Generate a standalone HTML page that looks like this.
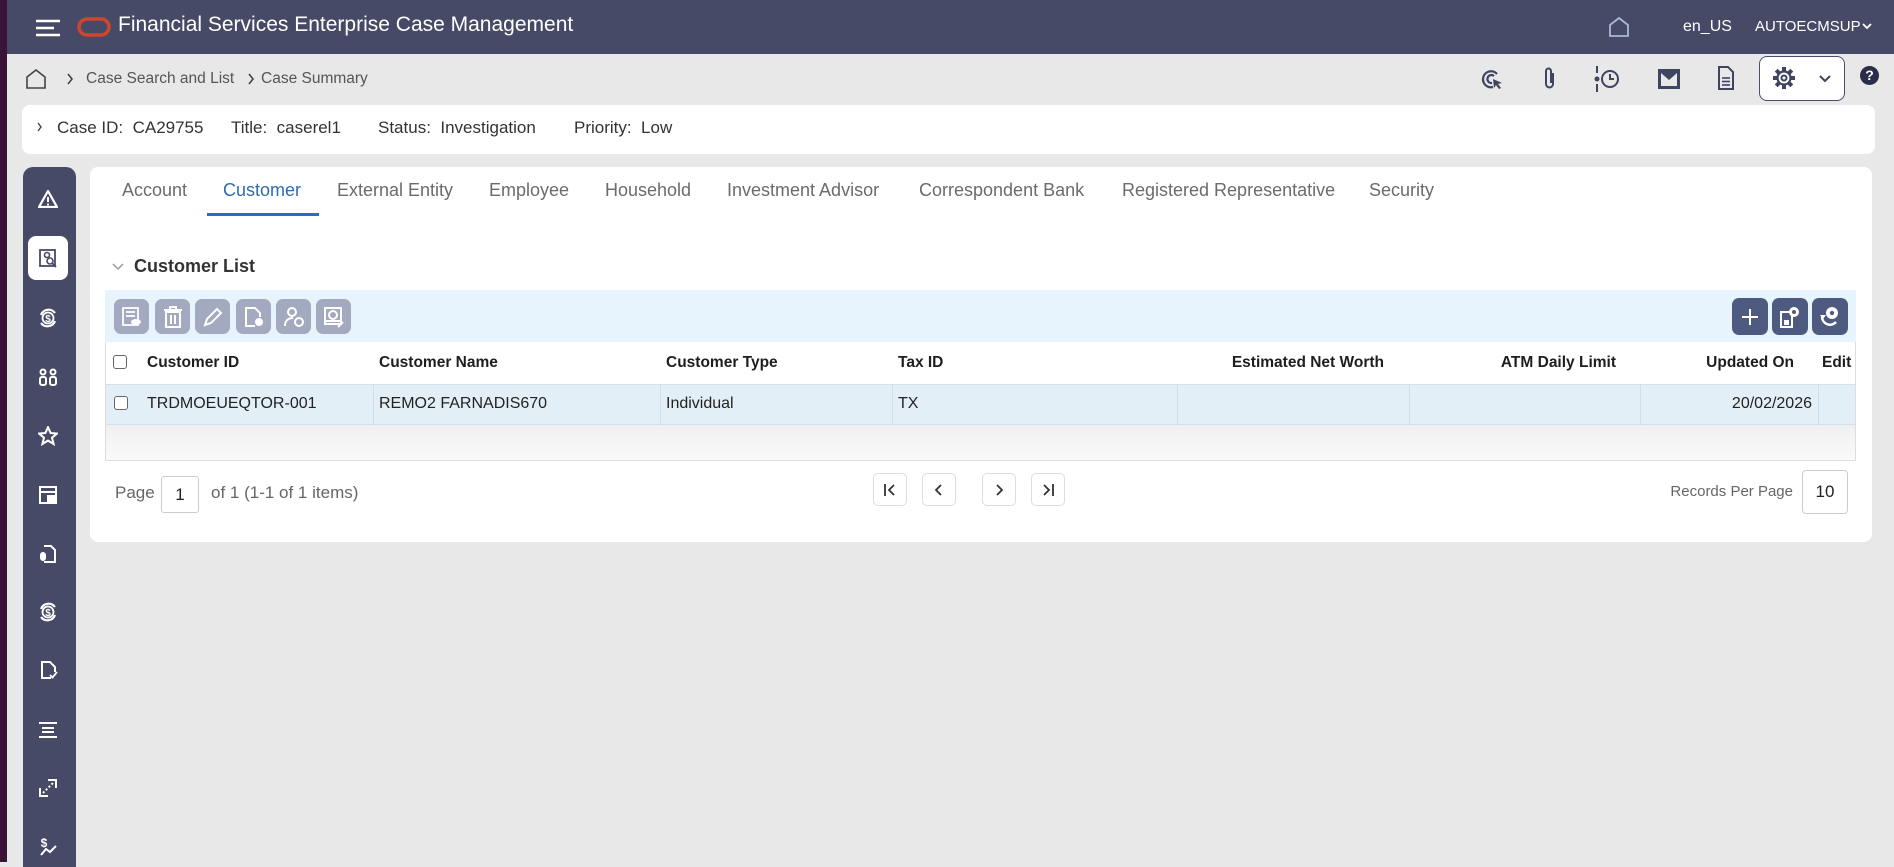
<!DOCTYPE html>
<html><head><meta charset="utf-8"><style>
*{box-sizing:border-box;margin:0;padding:0}
body{width:1894px;height:862px;overflow:hidden;background:#e8e8e8;font-family:"Liberation Sans",sans-serif;position:relative;color:#333}
.a{position:absolute}
.hdr{left:0;top:0;width:1894px;height:54px;background:#474a66}
.stripe{left:0;top:0;width:7px;height:862px;background:#3a1436}
.t{white-space:nowrap}
.tab{top:180px;font-size:18px;color:#6b6b6b}
.tb{width:35px;height:35px;top:299px;border-radius:7px;background:#a3a9be;display:flex;align-items:center;justify-content:center}
.rb{width:36px;height:37px;top:298px;border-radius:7px;background:#4f5a80;display:flex;align-items:center;justify-content:center}
.th{top:354px;font-size:15.5px;font-weight:bold;color:#1e1e1e}
.td{top:395px;font-size:16px;color:#222}
.sep{top:384px;width:1px;height:41px;background:#d4dde3}
.nb{top:473px;width:34px;height:33px;border:1px solid #ddd;border-radius:5px;background:#fff;display:flex;align-items:center;justify-content:center}
.cb{width:14px;height:14px;border:1.5px solid #666;border-radius:3px;background:#fff}
</style></head><body>
<div class="a hdr"></div>
<div class="a stripe"></div>
<svg class="a" style="left:36px;top:19px" width="26" height="18"><g stroke="#fff" stroke-width="2.5"><line x1="0" y1="2" x2="24" y2="2"/><line x1="0" y1="9" x2="18" y2="9"/><line x1="0" y1="16" x2="24" y2="16"/></g></svg>
<svg class="a" style="left:77px;top:17px" width="34" height="20"><rect x="2" y="2" width="30" height="16" rx="8" fill="none" stroke="#d2452c" stroke-width="3.5"/></svg>
<div class="a t" style="left:118px;top:13px;font-size:21px;color:#fff">Financial Services Enterprise Case Management</div>
<svg class="a" style="left:1608px;top:16px" width="22" height="22"><path d="M2 20V9L11 2l9 7v11z" fill="none" stroke="#aab8dc" stroke-width="1.8"/></svg>
<div class="a t" style="left:1683px;top:18px;font-size:16px;color:#fff">en_US</div>
<div class="a t" style="left:1755px;top:18px;font-size:15px;color:#fff">AUTOECMSUP</div>
<svg class="a" style="left:1861px;top:22px" width="12" height="8"><path d="M2 2l4 4 4-4" fill="none" stroke="#fff" stroke-width="1.8"/></svg>
<!-- breadcrumb -->
<svg class="a" style="left:25px;top:68px" width="22" height="22"><path d="M2 20V9L11 2l9 7v11z" fill="none" stroke="#444" stroke-width="1.6"/></svg>
<svg class="a" style="left:66px;top:73px" width="8" height="12"><path d="M2 1l4 5-4 5" fill="none" stroke="#444" stroke-width="1.6"/></svg>
<div class="a t" style="left:86px;top:70px;font-size:15.5px;color:#555">Case Search and List</div>
<svg class="a" style="left:247px;top:73px" width="8" height="12"><path d="M2 1l4 5-4 5" fill="none" stroke="#444" stroke-width="1.6"/></svg>
<div class="a t" style="left:261px;top:70px;font-size:15.5px;color:#555">Case Summary</div>
<!-- right icons -->
<svg class="a" style="left:1481px;top:68px" width="24" height="24"><g fill="none" stroke="#3f4460" stroke-width="2.2"><path d="M16 6a8 8 0 1 0-4 13"/><path d="M13 8a4 4 0 1 0-2 7"/></g><path d="M12 11l9 4-4 1 3 4-2 1-3-4-2 3z" fill="#3f4460"/></svg>
<svg class="a" style="left:1542px;top:66px" width="16" height="26"><path d="M11 7v11a3.5 3.5 0 0 1-7 0V5a2.5 2.5 0 0 1 5 0v12" fill="none" stroke="#3f4460" stroke-width="2"/></svg>
<svg class="a" style="left:1594px;top:65px" width="28" height="28"><g stroke="#3f4460" stroke-width="2" fill="none"><line x1="3" y1="1" x2="3" y2="8"/><line x1="3" y1="19" x2="3" y2="27"/><circle cx="16" cy="14" r="8"/><path d="M16 9v5h4"/></g><circle cx="3" cy="14" r="2.5" fill="#3f4460"/></svg>
<svg class="a" style="left:1657px;top:68px" width="24" height="22"><rect x="1" y="1" width="22" height="20" fill="#3f4460"/><path d="M4 5l8 7 8-7v13H4z" fill="#e8e8e8"/></svg>
<svg class="a" style="left:1717px;top:66px" width="18" height="24"><path d="M2 1h9l5 5v17H2z" fill="none" stroke="#3f4460" stroke-width="2"/><g stroke="#3f4460" stroke-width="1.6"><line x1="5" y1="12" x2="13" y2="12"/><line x1="5" y1="15.5" x2="13" y2="15.5"/><line x1="5" y1="19" x2="13" y2="19"/></g></svg>
<div class="a" style="left:1759px;top:56px;width:86px;height:45px;border:1.5px solid #4a4e68;border-radius:8px;background:#fff"></div>
<svg class="a" style="left:1771px;top:65px" width="26" height="26"><g transform="translate(13 13)" fill="#3f4460"><rect x="-2" y="-11" width="4" height="5"/><rect x="-2" y="-11" width="4" height="5" transform="rotate(45)"/><rect x="-2" y="-11" width="4" height="5" transform="rotate(90)"/><rect x="-2" y="-11" width="4" height="5" transform="rotate(135)"/><rect x="-2" y="-11" width="4" height="5" transform="rotate(180)"/><rect x="-2" y="-11" width="4" height="5" transform="rotate(225)"/><rect x="-2" y="-11" width="4" height="5" transform="rotate(270)"/><rect x="-2" y="-11" width="4" height="5" transform="rotate(315)"/></g><circle cx="13" cy="13" r="6.5" fill="#fff" stroke="#3f4460" stroke-width="2.2"/><circle cx="13" cy="13" r="2.5" fill="none" stroke="#3f4460" stroke-width="2"/></svg>
<svg class="a" style="left:1818px;top:74px" width="14" height="9"><path d="M2 2l5 5 5-5" fill="none" stroke="#3f4460" stroke-width="2"/></svg>
<div class="a" style="left:1860px;top:66px;width:19px;height:19px;border-radius:50%;background:#2a2e48;color:#fff;font-size:14px;font-weight:bold;text-align:center;line-height:19px">?</div>
<!-- case bar -->
<div class="a" style="left:22px;top:105px;width:1853px;height:49px;background:#fff;border-radius:8px"></div>
<svg class="a" style="left:36px;top:122px" width="8" height="10"><path d="M2 1l3 4-3 4" fill="none" stroke="#444" stroke-width="1.4"/></svg>
<div class="a t" style="left:57px;top:118px;font-size:17px;color:#333">Case ID:&nbsp; CA29755</div>
<div class="a t" style="left:231px;top:118px;font-size:17px;color:#333">Title:&nbsp;&nbsp;caserel1</div>
<div class="a t" style="left:378px;top:118px;font-size:17px;color:#333">Status:&nbsp; Investigation</div>
<div class="a t" style="left:574px;top:118px;font-size:17px;color:#333">Priority:&nbsp; Low</div>
<!-- sidebar -->
<div class="a" style="left:23px;top:167px;width:53px;height:700px;background:#474a66;border-radius:10px 10px 0 0"></div>
<div class="a" style="left:28px;top:236px;width:40px;height:44px;background:#fff;border-radius:8px"></div>
<svg class="a" style="left:38px;top:190px" width="20" height="18"><path d="M10 1L19 17H1z" fill="none" stroke="#fff" stroke-width="2.2"/><line x1="10" y1="7" x2="10" y2="12" stroke="#fff" stroke-width="2"/><circle cx="10" cy="14.5" r="1.1" fill="#fff"/></svg>
<svg class="a" style="left:39px;top:249px" width="19" height="19"><rect x="1" y="1" width="15" height="16" fill="none" stroke="#474a66" stroke-width="1.8"/><circle cx="8" cy="6" r="2.5" fill="none" stroke="#474a66" stroke-width="1.6"/><circle cx="11" cy="12" r="3" fill="#fff" stroke="#474a66" stroke-width="1.6"/><line x1="13" y1="14" x2="17" y2="18" stroke="#474a66" stroke-width="1.8"/></svg>
<svg class="a" style="left:37px;top:307px" width="22" height="22"><path d="M4 8a8 8 0 0 1 14-2M18 14a8 8 0 0 1-14 2" fill="none" stroke="#fff" stroke-width="2.2"/><circle cx="11" cy="11" r="5.5" fill="none" stroke="#fff" stroke-width="1.8"/><text x="11" y="15" font-size="10" font-weight="bold" fill="#fff" text-anchor="middle" font-family="Liberation Sans">$</text></svg>
<svg class="a" style="left:38px;top:368px" width="20" height="20"><g fill="none" stroke="#fff" stroke-width="2"><circle cx="5" cy="4" r="2.5"/><circle cx="15" cy="4" r="2.5"/><rect x="2" y="9" width="6" height="8" rx="2"/><rect x="12" y="9" width="6" height="8" rx="2"/></g></svg>
<svg class="a" style="left:38px;top:426px" width="20" height="20"><path d="M10 1l2.6 6 6.4.5-5 4.2 1.6 6.3L10 14.6 4.4 18 6 11.7 1 7.5l6.4-.5z" fill="none" stroke="#fff" stroke-width="2"/></svg>
<svg class="a" style="left:38px;top:485px" width="20" height="20"><rect x="2" y="2" width="16" height="16" fill="none" stroke="#fff" stroke-width="2"/><line x1="2" y1="7" x2="18" y2="7" stroke="#fff" stroke-width="2"/><rect x="9" y="10" width="8" height="8" fill="#fff"/></svg>
<svg class="a" style="left:38px;top:544px" width="20" height="20"><path d="M6 2h7l4 4v12H6" fill="none" stroke="#fff" stroke-width="2"/><rect x="2" y="8" width="6" height="9" rx="3" fill="#fff"/></svg>
<svg class="a" style="left:37px;top:601px" width="22" height="22"><path d="M4 8a8 8 0 0 1 14-2M18 14a8 8 0 0 1-14 2" fill="none" stroke="#fff" stroke-width="2.2"/><circle cx="11" cy="11" r="5.5" fill="none" stroke="#fff" stroke-width="1.8"/><text x="11" y="15" font-size="10" font-weight="bold" fill="#fff" text-anchor="middle" font-family="Liberation Sans">$</text></svg>
<svg class="a" style="left:39px;top:660px" width="20" height="20"><path d="M12 18H3V2h8l5 5v5" fill="none" stroke="#fff" stroke-width="2"/><path d="M11 15l2.5 2.5L18 12" fill="none" stroke="#fff" stroke-width="1.8"/></svg>
<svg class="a" style="left:38px;top:720px" width="20" height="20"><g stroke="#fff" stroke-width="2"><line x1="1" y1="3" x2="19" y2="3"/><line x1="4" y1="8" x2="16" y2="8"/><line x1="4" y1="12" x2="16" y2="12"/><line x1="1" y1="17" x2="19" y2="17"/></g></svg>
<svg class="a" style="left:38px;top:778px" width="20" height="20"><g fill="none" stroke="#fff" stroke-width="2"><path d="M2 10v8h8"/><path d="M10 2h8v8"/><line x1="5" y1="15" x2="15" y2="5" stroke-dasharray="2 2"/></g></svg>
<svg class="a" style="left:38px;top:836px" width="20" height="20"><text x="6" y="11" font-size="12" font-weight="bold" fill="#fff" text-anchor="middle" font-family="Liberation Sans">$</text><path d="M3 19l5-6 4 3 6-6" fill="none" stroke="#fff" stroke-width="2"/></svg>
<!-- main card -->
<div class="a" style="left:90px;top:167px;width:1782px;height:375px;background:#fff;border-radius:8px"></div>
<div class="a t tab" style="left:122px">Account</div>
<div class="a t tab" style="left:223px;color:#2e6bb0">Customer</div>
<div class="a" style="left:207px;top:213px;width:112px;height:3px;background:#1d6fd1"></div>
<div class="a t tab" style="left:337px">External Entity</div>
<div class="a t tab" style="left:489px">Employee</div>
<div class="a t tab" style="left:605px">Household</div>
<div class="a t tab" style="left:727px">Investment Advisor</div>
<div class="a t tab" style="left:919px">Correspondent Bank</div>
<div class="a t tab" style="left:1122px">Registered Representative</div>
<div class="a t tab" style="left:1369px">Security</div>
<svg class="a" style="left:112px;top:263px" width="12" height="8"><path d="M1 1l5 5 5-5" fill="none" stroke="#999" stroke-width="1.5"/></svg>
<div class="a t" style="left:134px;top:256px;font-size:18px;font-weight:bold;color:#333">Customer List</div>
<!-- toolbar -->
<div class="a" style="left:105px;top:290px;width:1751px;height:52px;background:#e8f4fd"></div>
<div class="a tb" style="left:114px"><svg width="22" height="22"><g fill="none" stroke="#fff" stroke-width="1.8"><rect x="2" y="2" width="15" height="17"/><line x1="5" y1="6" x2="14" y2="6"/><line x1="5" y1="10" x2="14" y2="10"/></g><ellipse cx="15" cy="16" rx="5" ry="3" fill="#fff"/></svg></div>
<div class="a tb" style="left:155px"><svg width="20" height="22"><g fill="none" stroke="#fff" stroke-width="2"><line x1="1" y1="4" x2="19" y2="4"/><path d="M7 4V1h6v3"/><rect x="3" y="6" width="14" height="15"/><line x1="8" y1="9" x2="8" y2="18"/><line x1="12" y1="9" x2="12" y2="18"/></g></svg></div>
<div class="a tb" style="left:195px"><svg width="22" height="22"><path d="M3 19l2-6L15 3l4 4L9 17z" fill="none" stroke="#fff" stroke-width="2"/></svg></div>
<div class="a tb" style="left:236px"><svg width="22" height="22"><path d="M12 20H3V2h9l5 5v4" fill="none" stroke="#fff" stroke-width="2"/><circle cx="16" cy="16" r="4" fill="#fff"/></svg></div>
<div class="a tb" style="left:276px"><svg width="22" height="22"><g fill="none" stroke="#fff" stroke-width="2"><circle cx="9" cy="6" r="4"/><path d="M2 20c0-5 3-8 8-8"/><circle cx="16" cy="16" r="4"/></g></svg></div>
<div class="a tb" style="left:316px"><svg width="22" height="22"><g fill="none" stroke="#fff" stroke-width="2"><rect x="2" y="2" width="16" height="16"/><circle cx="10" cy="9" r="4"/><line x1="2" y1="15" x2="18" y2="15"/></g><path d="M15 21l5-5" stroke="#fff" stroke-width="2"/></svg></div>
<div class="a rb" style="left:1732px"><svg width="18" height="18"><g stroke="#fff" stroke-width="2"><line x1="9" y1="1" x2="9" y2="17"/><line x1="1" y1="9" x2="17" y2="9"/></g></svg></div>
<div class="a rb" style="left:1772px"><svg width="22" height="24"><rect x="2" y="7" width="11" height="15" fill="none" stroke="#fff" stroke-width="2"/><rect x="5" y="15" width="5" height="5" fill="#fff"/><circle cx="15" cy="7" r="5" fill="#fff"/><circle cx="15" cy="7" r="2" fill="#4f5a80"/></svg></div>
<div class="a rb" style="left:1812px"><svg width="24" height="24"><path d="M4 12a8 8 0 0 0 14 5" fill="none" stroke="#fff" stroke-width="2.5"/><path d="M2 10l3 4 3-4z" fill="#fff"/><circle cx="14" cy="8" r="6" fill="#fff"/><circle cx="14" cy="8" r="2.2" fill="#4f5a80"/></svg></div>
<!-- table -->
<div class="a" style="left:105px;top:342px;width:1751px;height:119px;border:1px solid #ddd;border-top:none;background:#fff"></div>
<div class="a" style="left:106px;top:384px;width:1749px;height:41px;background:#e3eff6;border-top:1px solid #d6dfe5;border-bottom:1px solid #d6dfe5"></div>
<div class="a" style="left:106px;top:425px;width:1749px;height:35px;background:linear-gradient(#f0f0f0,#fafafa)"></div>
<div class="a sep" style="left:373px"></div><div class="a sep" style="left:660px"></div><div class="a sep" style="left:892px"></div><div class="a sep" style="left:1177px"></div><div class="a sep" style="left:1409px"></div><div class="a sep" style="left:1640px"></div><div class="a sep" style="left:1818px"></div>
<div class="a cb" style="left:113px;top:355px"></div>
<div class="a t th" style="left:147px">Customer ID</div>
<div class="a t th" style="left:379px">Customer Name</div>
<div class="a t th" style="left:666px">Customer Type</div>
<div class="a t th" style="left:898px">Tax ID</div>
<div class="a t th" style="right:510px">Estimated Net Worth</div>
<div class="a t th" style="right:278px">ATM Daily Limit</div>
<div class="a t th" style="right:100px">Updated On</div>
<div class="a t th" style="left:1822px;width:34px;overflow:hidden">Edit D</div>
<div class="a cb" style="left:114px;top:396px"></div>
<div class="a t td" style="left:147px">TRDMOEUEQTOR-001</div>
<div class="a t td" style="left:379px">REMO2 FARNADIS670</div>
<div class="a t td" style="left:666px">Individual</div>
<div class="a t td" style="left:898px">TX</div>
<div class="a t td" style="right:82px">20/02/2026</div>
<!-- pagination -->
<div class="a t" style="left:115px;top:483px;font-size:17px;color:#666">Page</div>
<div class="a" style="left:161px;top:476px;width:38px;height:37px;border:1px solid #ccc;border-radius:3px;font-size:17px;color:#222;text-align:center;line-height:36px">1</div>
<div class="a t" style="left:211px;top:483px;font-size:17px;color:#666">of 1 (1-1 of 1 items)</div>
<div class="a nb" style="left:873px"><svg width="14" height="14"><g fill="none" stroke="#333" stroke-width="1.8"><line x1="2" y1="1" x2="2" y2="13"/><path d="M11 2L6 7l5 5"/></g></svg></div>
<div class="a nb" style="left:922px"><svg width="14" height="14"><path d="M9 2L4 7l5 5" fill="none" stroke="#333" stroke-width="1.8"/></svg></div>
<div class="a nb" style="left:982px"><svg width="14" height="14"><path d="M5 2l5 5-5 5" fill="none" stroke="#333" stroke-width="1.8"/></svg></div>
<div class="a nb" style="left:1031px"><svg width="14" height="14"><g fill="none" stroke="#333" stroke-width="1.8"><path d="M3 2l5 5-5 5"/><line x1="12" y1="1" x2="12" y2="13"/></g></svg></div>
<div class="a t" style="right:101px;top:483px;font-size:15px;color:#666">Records Per Page</div>
<div class="a" style="left:1802px;top:470px;width:46px;height:44px;border:1px solid #ccc;border-radius:4px;font-size:17px;color:#222;text-align:center;line-height:42px">10</div>
</body></html>
